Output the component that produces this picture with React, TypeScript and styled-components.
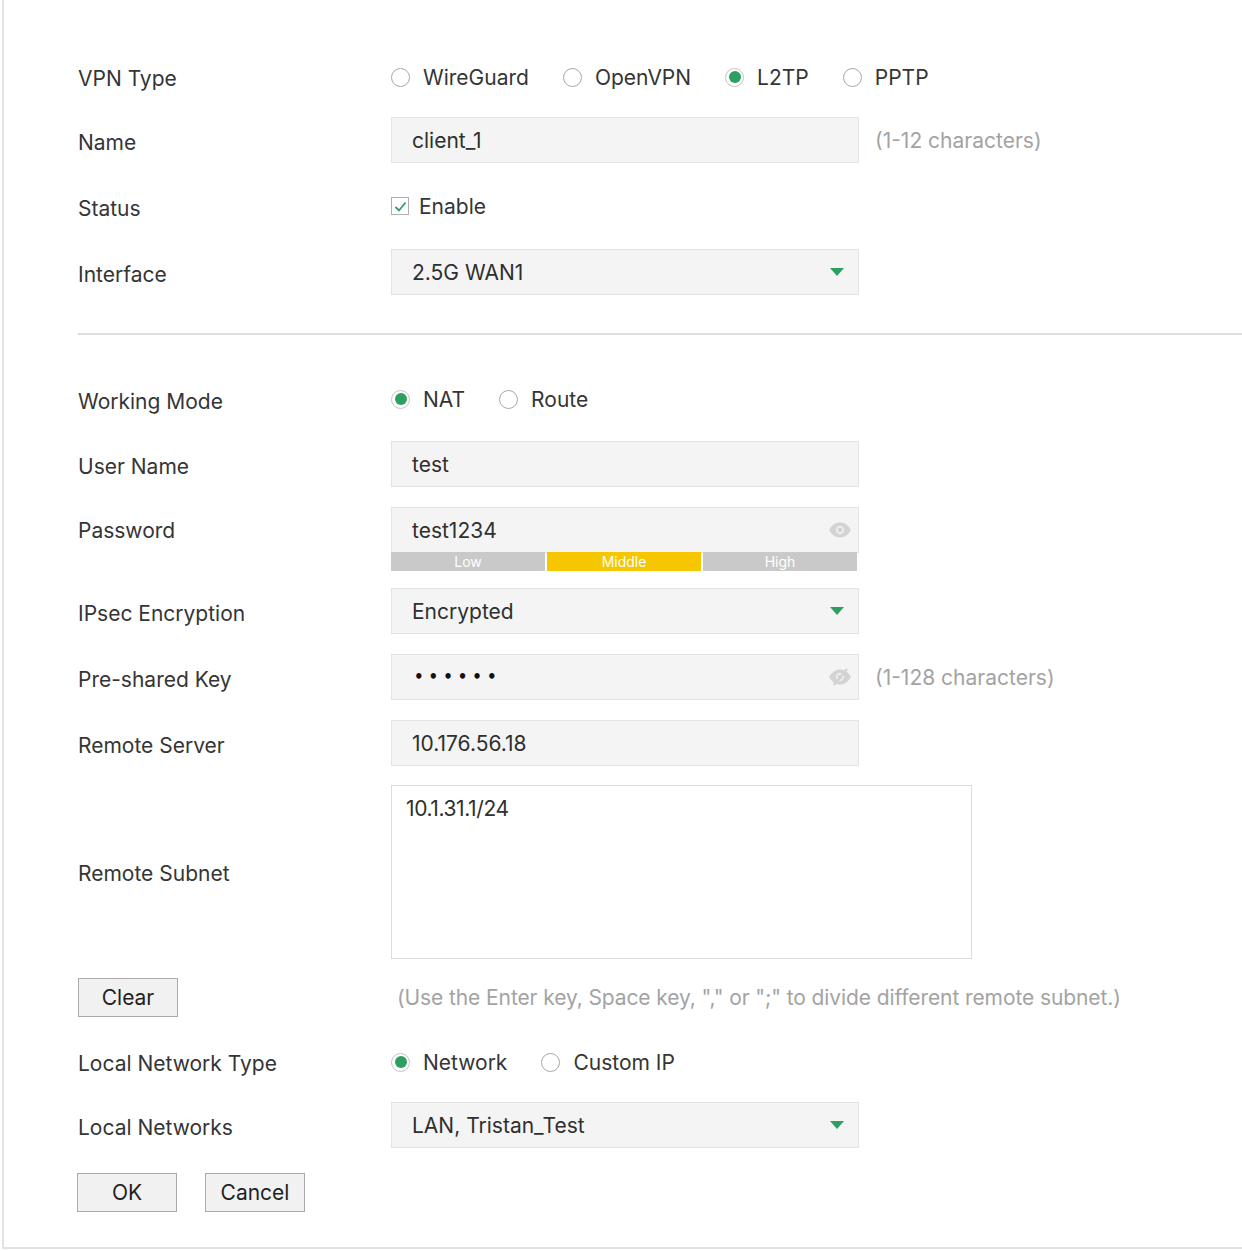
import React from "react";
import styled, { createGlobalStyle } from "styled-components";

const GlobalStyle = createGlobalStyle`
  html, body { margin: 0; padding: 0; background: #ffffff; }
  body { font-family: Inter, "Noto Sans", "Liberation Sans", sans-serif; color: #333333; }
  * { box-sizing: border-box; }
`;

const GREEN = "#2e9f63";

const Frame = styled.div`
  margin-left: 2px;
  width: 1240px;
  height: 1249px;
  border-left: 2px solid #e2e2e2;
  border-bottom: 2px solid #e2e2e2;
  padding: 53px 0 0 74px;
`;

const Row = styled.div<{ $mb?: number; $h?: number }>`
  display: grid;
  grid-template-columns: 313px 1fr;
  align-items: center;
  min-height: ${(p) => p.$h ?? 46}px;
  margin-bottom: ${(p) => p.$mb ?? 20}px;
`;

const Label = styled.div<{ $pt?: number }>`
  font-size: 21px;
  color: #353535;
  padding-top: ${(p) => p.$pt ?? 5}px;
`;

const Field = styled.div`
  display: flex;
  align-items: center;
  gap: 16px;
`;

const RadioGroup = styled.div`
  display: flex;
  align-items: center;
  gap: 34px;
  padding-top: 2px;
`;

const RadioItem = styled.label`
  display: flex;
  align-items: center;
  gap: 13px;
  font-size: 21px;
  color: #353535;
`;

const RadioCircle = styled.span<{ $checked?: boolean }>`
  width: 19px;
  height: 19px;
  border-radius: 50%;
  border: 1.5px solid ${(p) => (p.$checked ? "#c4c4c4" : "#a8a8a8")};
  background: #fff;
  display: flex;
  align-items: center;
  justify-content: center;
  &::after {
    content: "";
    width: 12px;
    height: 12px;
    border-radius: 50%;
    background: ${(p) => (p.$checked ? GREEN : "transparent")};
  }
`;

const CheckItem = styled.label`
  display: flex;
  align-items: center;
  gap: 10px;
  font-size: 21px;
  color: #353535;
`;

const CheckBox = styled.span`
  width: 18px;
  height: 18px;
  border: 1.5px solid #b0b0b0;
  background: #fff;
  display: flex;
  align-items: center;
  justify-content: center;
`;

const InputBox = styled.div<{ $w?: number }>`
  width: ${(p) => p.$w ?? 468}px;
  height: 46px;
  background: #f4f4f4;
  border: 1.5px solid #e3e3e3;
  display: flex;
  align-items: center;
  padding: 0 6px 0 20px;
  font-size: 21px;
  color: #2f2f2f;
  justify-content: space-between;
`;

const SelectBox = styled(InputBox)`
  padding-right: 13px;
`;

const Dots = styled.span`
  font-size: 15px;
  letter-spacing: 5px;
  color: #111;
  font-weight: 700;
  font-family: "DejaVu Sans", sans-serif;
  padding-left: 2px;
`;

const Hint = styled.span`
  font-size: 21px;
  color: #a3a3a3;
`;

const Divider = styled.div`
  height: 2px;
  background: #dddddd;
  margin: 38px 0 40px 0;
`;

const PasswordBlock = styled.div`
  display: flex;
  flex-direction: column;
`;

const Strength = styled.div`
  display: flex;
  gap: 2px;
  width: 466px;
  height: 19px;
  margin-top: -1px;
`;

const Seg = styled.div<{ $active?: boolean }>`
  flex: 1;
  background: ${(p) => (p.$active ? "#f6c700" : "#c9c9c9")};
  color: #ffffff;
  font-size: 14px;
  display: flex;
  align-items: center;
  justify-content: center;
`;

const TextArea = styled.div`
  width: 581px;
  height: 174px;
  border: 1.5px solid #dcdcdc;
  background: #fff;
  padding: 10px 14px;
  font-size: 21px;
  letter-spacing: -0.4px;
  color: #2f2f2f;
`;

const Button = styled.button<{ $w?: number }>`
  width: ${(p) => p.$w ?? 100}px;
  height: 39px;
  background: #f1f1f1;
  border: 1.5px solid #a9a9a9;
  font-family: Inter, "Noto Sans", sans-serif;
  font-size: 21px;
  color: #1f1f1f;
  padding: 0;
`;

const ButtonRow = styled.div`
  display: flex;
  gap: 28px;
  margin-left: -1px;
`;

const HintLine = styled.div`
  padding-left: 6px;
  font-size: 21px;
  letter-spacing: -0.1px;
  color: #a3a3a3;
  white-space: nowrap;
`;

const Arrow = () => (
  <svg width="16" height="10" viewBox="0 0 16 10">
    <polygon points="1,1 15,1 8,9" fill={GREEN} />
  </svg>
);

const Eye = ({ off }: { off?: boolean }) => (
  <svg width="24" height="18" viewBox="0 0 24 18">
    <path d="M1 9 C5 2.5 9 1.5 12 1.5 C15 1.5 19 2.5 23 9 C19 15.5 15 16.5 12 16.5 C9 16.5 5 15.5 1 9 Z" fill="#d3d3d3" />
    <circle cx="12" cy="9" r="4.2" fill="#ececec" />
    <circle cx="12" cy="9" r="2" fill="#cfcfcf" />
    {off && <line x1="19" y1="1" x2="6" y2="17" stroke="#d3d3d3" strokeWidth="2.4" />}
  </svg>
);

const Check = () => (
  <svg width="13" height="11" viewBox="0 0 13 11">
    <polyline points="1.5,6 5,9.5 11.5,1.5" fill="none" stroke={GREEN} strokeWidth="1.8" />
  </svg>
);

const Radio = ({ label, checked }: { label: string; checked?: boolean }) => (
  <RadioItem>
    <RadioCircle $checked={checked} />
    {label}
  </RadioItem>
);

export default function App() {
  return (
    <>
      <GlobalStyle />
      <Frame>
        <Row $mb={18}>
          <Label>VPN Type</Label>
          <RadioGroup>
            <Radio label="WireGuard" />
            <Radio label="OpenVPN" />
            <Radio label="L2TP" checked />
            <Radio label="PPTP" />
          </RadioGroup>
        </Row>
        <Row>
          <Label>Name</Label>
          <Field>
            <InputBox>client_1</InputBox>
            <Hint>(1-12 characters)</Hint>
          </Field>
        </Row>
        <Row>
          <Label>Status</Label>
          <CheckItem>
            <CheckBox>
              <Check />
            </CheckBox>
            Enable
          </CheckItem>
        </Row>
        <Row $mb={0}>
          <Label>Interface</Label>
          <SelectBox>
            2.5G WAN1
            <Arrow />
          </SelectBox>
        </Row>

        <Divider />

        <Row>
          <Label $pt={7}>Working Mode</Label>
          <RadioGroup>
            <Radio label="NAT" checked />
            <Radio label="Route" />
          </RadioGroup>
        </Row>
        <Row>
          <Label>User Name</Label>
          <InputBox>test</InputBox>
        </Row>
        <Row $mb={17} style={{ alignItems: "start" }}>
          <Label $pt={11}>Password</Label>
          <PasswordBlock>
            <InputBox>
              test1234
              <Eye />
            </InputBox>
            <Strength>
              <Seg>Low</Seg>
              <Seg $active>Middle</Seg>
              <Seg>High</Seg>
            </Strength>
          </PasswordBlock>
        </Row>
        <Row>
          <Label>IPsec Encryption</Label>
          <SelectBox>
            Encrypted
            <Arrow />
          </SelectBox>
        </Row>
        <Row>
          <Label>Pre-shared Key</Label>
          <Field>
            <InputBox>
              <Dots>••••••</Dots>
              <Eye off />
            </InputBox>
            <Hint>(1-128 characters)</Hint>
          </Field>
        </Row>
        <Row $mb={19}>
          <Label>Remote Server</Label>
          <InputBox>10.176.56.18</InputBox>
        </Row>
        <Row $mb={19}>
          <Label $pt={2}>Remote Subnet</Label>
          <TextArea>10.1.31.1/24</TextArea>
        </Row>
        <Row $h={39} $mb={21}>
          <div>
            <Button>Clear</Button>
          </div>
          <HintLine>(Use the Enter key, Space key, "," or ";" to divide different remote subnet.)</HintLine>
        </Row>
        <Row $mb={18}>
          <Label>Local Network Type</Label>
          <RadioGroup>
            <Radio label="Network" checked />
            <Radio label="Custom IP" />
          </RadioGroup>
        </Row>
        <Row $mb={25}>
          <Label>Local Networks</Label>
          <SelectBox>
            LAN, Tristan_Test
            <Arrow />
          </SelectBox>
        </Row>
        <ButtonRow>
          <Button>OK</Button>
          <Button>Cancel</Button>
        </ButtonRow>
      </Frame>
    </>
  );
}
